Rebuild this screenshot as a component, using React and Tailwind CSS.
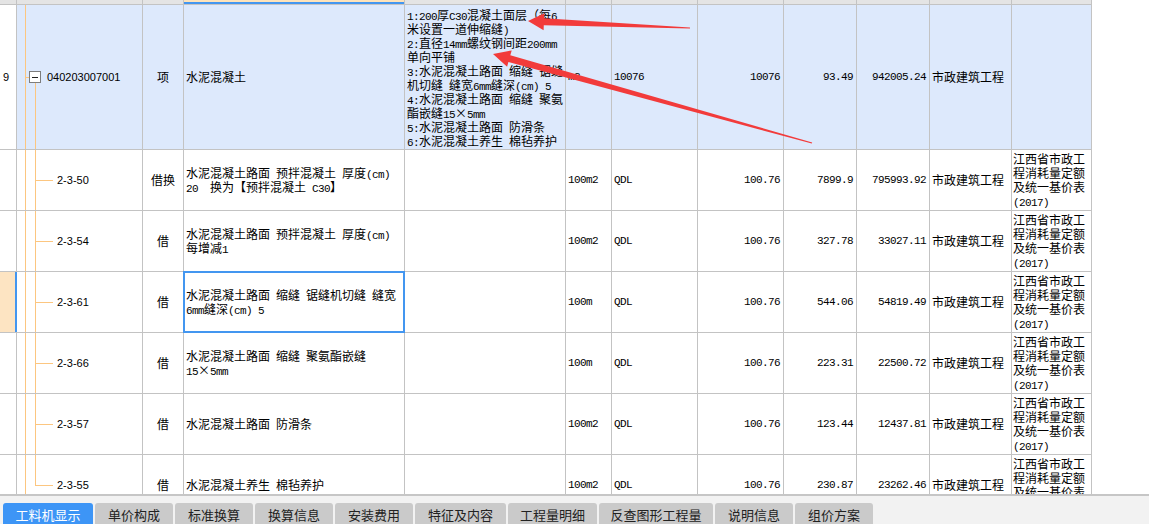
import React from 'react';

const COLS = 'grid grid-cols-[17px_126px_41px_221px_161px_46px_86px_86px_73px_73px_82px_80px] w-[1092px]';
const LINE = 'border-[#c3c3c3]';
const CJK = "font-['Noto_Sans_CJK_SC',sans-serif] text-[12px] leading-[14px]";
const MONO = "font-['Liberation_Mono','Noto_Sans_CJK_SC',monospace] text-[11px] tracking-[-0.6px]";
const SANS = "font-['Liberation_Sans',sans-serif] text-[11px]";
const TREE = 'bg-[#fcc680]';
const BLUE = 'bg-[#dde9fc]';
const STD = ['江西省市政工', '程消耗量定额', '及统一基价表', '(2017)'];

const items = [
  { code: '2-3-50', type: '借换', name: ['水泥混凝土路面 预拌混凝土 厚度(cm)', '20  换为【预拌混凝土 C30】'], unit: '100m2', qty: '100.76', price: '7899.9', total: '795993.92' },
  { code: '2-3-54', type: '借', name: ['水泥混凝土路面 预拌混凝土 厚度(cm)', '每增减1'], unit: '100m2', qty: '100.76', price: '327.78', total: '33027.11' },
  { code: '2-3-61', type: '借', name: ['水泥混凝土路面 缩缝 锯缝机切缝 缝宽', '6mm缝深(cm) 5'], unit: '100m', qty: '100.76', price: '544.06', total: '54819.49', selected: true },
  { code: '2-3-66', type: '借', name: ['水泥混凝土路面 缩缝 聚氨酯嵌缝', '15×5mm'], unit: '100m', qty: '100.76', price: '223.31', total: '22500.72' },
  { code: '2-3-57', type: '借', name: ['水泥混凝土路面 防滑条'], unit: '100m2', qty: '100.76', price: '123.44', total: '12437.81' },
  { code: '2-3-55', type: '借', name: ['水泥混凝土养生 棉毡养护'], unit: '100m2', qty: '100.76', price: '230.87', total: '23262.46', last: true },
];

const features = [
  '1:200厚C30混凝土面层（每6',
  '米设置一道伸缩缝)',
  '2:直径14mm螺纹钢间距200mm',
  '单向平铺',
  '3:水泥混凝土路面 缩缝 锯缝',
  '机切缝 缝宽6mm缝深(cm) 5',
  '4:水泥混凝土路面 缩缝 聚氨',
  '酯嵌缝15×5mm',
  '5:水泥混凝土路面 防滑条',
  '6:水泥混凝土养生 棉毡养护',
];

const tabs = [
  ['工料机显示', 'w-[90px]'],
  ['单价构成', 'w-[78px]'],
  ['标准换算', 'w-[78px]'],
  ['换算信息', 'w-[78px]'],
  ['安装费用', 'w-[78px]'],
  ['特征及内容', 'w-[91px]'],
  ['工程量明细', 'w-[89px]'],
  ['反查图形工程量', 'w-[114px]'],
  ['说明信息', 'w-[78px]'],
  ['组价方案', 'w-[78px]'],
];

// half-width runs get the narrow mono face, like the old song-ti grid
const Mixed = ({ text }) => (
  <div className="h-[14px] leading-[14px] whitespace-pre">
    {text.split(/([\x20-\x7e]+)/).map((part, i) =>
      i % 2 ? (
        <span key={i} className={`${MONO} leading-[14px]`}>{part}</span>
      ) : (
        <span key={i}>{part}</span>
      )
    )}
  </div>
);

// tapered arrow: tail S -> tip T
const arrowPoints = (S, T, L, W, w1, w0) => {
  const dx = T[0] - S[0];
  const dy = T[1] - S[1];
  const len = Math.hypot(dx, dy);
  const ux = dx / len, uy = dy / len;
  const nx = -uy, ny = ux;
  const B = [T[0] - ux * L, T[1] - uy * L];
  const p = (o, k) => `${(o[0] + nx * k).toFixed(1)},${(o[1] + ny * k).toFixed(1)}`;
  return [p(S, w0), p(B, w1), p(B, W), `${T[0]},${T[1]}`, p(B, -W), p(B, -w1), p(S, -w0)].join(' ');
};

const Num = ({ children, className = '' }) => (
  <div className={`flex items-center justify-end pr-[3px] border-r ${LINE} ${MONO} ${className}`}>{children}</div>
);

const Left = ({ children, className = '' }) => (
  <div className={`flex items-center pl-[2px] border-r ${LINE} ${className}`}>{children}</div>
);

const ItemRow = ({ it }) => (
  <div className={`${COLS} h-[61px] border-b ${LINE} text-black`}>
    <div className={it.selected ? 'bg-[#fde4c2] border-r-2 border-[#4396f0]' : `border-r ${LINE}`} />
    <div className={`flex border-r ${LINE}`}>
      <div className="w-[8px]" />
      <div className={`w-px ${TREE}`} />
      <div className="w-[9px]" />
      <div className="w-px flex flex-col">
        <div className={`${it.last ? 'h-[31px]' : 'flex-1'} ${TREE}`} />
      </div>
      <div className="flex items-center">
        <div className={`w-[17px] h-px ${TREE}`} />
        <span className={`ml-[4px] ${SANS}`}>{it.code}</span>
      </div>
    </div>
    <div className={`flex items-center justify-center border-r ${LINE} ${CJK}`}>{it.type}</div>
    <div className={`relative flex flex-col justify-center pl-[2px] border-r ${LINE} ${CJK}`}>
      {it.name.map((l) => (
        <Mixed key={l} text={l} />
      ))}
      {it.selected && <div className="absolute -inset-px border-2 border-[#4396f0] z-10" />}
    </div>
    <div className={`border-r ${LINE}`} />
    <Left className={MONO}>{it.unit}</Left>
    <Left className={MONO}>QDL</Left>
    <Num>{it.qty}</Num>
    <Num>{it.price}</Num>
    <Num>{it.total}</Num>
    <Left className={CJK}>市政建筑工程</Left>
    <div className={`flex flex-col justify-center pl-px border-r ${LINE} ${CJK}`}>
      {STD.map((l) => (
        <Mixed key={l} text={l} />
      ))}
    </div>
  </div>
);

export default function App() {
  return (
    <div className="w-[1149px] h-[524px] overflow-hidden bg-white flex flex-col">
      <div className="relative h-[494px] overflow-hidden">
        {/* header remnant */}
        <div className={`${COLS} h-[5px] border-b ${LINE}`}>
          {Array.from({ length: 12 }).map((_, i) => (
            <div
              key={i}
              className={`border-r ${LINE} ${i === 3 ? 'bg-[#fde3bb] shadow-[inset_0_-2px_0_#4396f0]' : 'bg-[#e4e4e4]'}`}
            />
          ))}
        </div>

        {/* bill row */}
        <div className={`${COLS} h-[145px] border-b ${LINE} text-black`}>
          <div className={`flex items-center pl-[3px] border-r ${LINE} ${SANS}`}>9</div>
          <div className={`flex border-r ${LINE} ${BLUE}`}>
            <div className="w-[8px]" />
            <div className={`w-px ${TREE}`} />
            <div className="flex-1 flex flex-col">
              <div className="flex-1" />
              <div className="flex items-center h-[12px]">
                <div className={`w-[3px] h-px ${TREE}`} />
                <div className="w-[12px] h-[12px] border border-[#7d7d7d] bg-white flex items-center justify-center">
                  <div className="w-[6px] h-px bg-[#222]" />
                </div>
                <span className={`ml-[6px] ${SANS}`}>040203007001</span>
              </div>
              <div className="flex-1 flex">
                <div className="w-[9px]" />
                <div className={`w-px ${TREE}`} />
              </div>
            </div>
          </div>
          <div className={`flex items-center justify-center border-r ${LINE} ${BLUE} ${CJK}`}>项</div>
          <Left className={`${BLUE} ${CJK}`}>水泥混凝土</Left>
          <div className={`flex flex-col justify-center pl-[2px] pt-[1px] border-r ${LINE} ${BLUE} ${CJK}`}>
            {features.map((l) => (
              <Mixed key={l} text={l} />
            ))}
          </div>
          <Left className={`${BLUE} ${MONO}`}>m2</Left>
          <Left className={`${BLUE} ${MONO}`}>10076</Left>
          <Num className={BLUE}>10076</Num>
          <Num className={BLUE}>93.49</Num>
          <Num className={BLUE}>942005.24</Num>
          <Left className={`${BLUE} ${CJK}`}>市政建筑工程</Left>
          <div className={`border-r ${LINE} ${BLUE}`} />
        </div>

        {items.map((it) => (
          <ItemRow key={it.code} it={it} />
        ))}

        {/* annotation arrows */}
        <svg className="absolute left-0 top-0 z-20 pointer-events-none" width="1149" height="494">
          <polygon points={arrowPoints([690, 28], [528, 21], 16, 8.5, 3.5, 0.6)} fill="#f23b3b" />
          <polygon points={arrowPoints([812, 143], [493, 54], 17, 8.5, 3.5, 0.6)} fill="#f23b3b" />
        </svg>
      </div>

      <div className="h-[30px] border-t-2 border-[#c6c6c6] bg-[#f2f2f2] flex gap-[2px] pl-[3px] pt-[7px]">
        {tabs.map(([t, w], i) => (
          <div
            key={t}
            className={`${w} h-[24px] shrink-0 rounded-t-[3px] flex justify-center pt-[3px] text-[13px] leading-[18px] font-['Noto_Sans_CJK_SC',sans-serif] ${
              i === 0 ? 'bg-[#3d95f6] text-white' : 'bg-[#cacaca] text-[#222]'
            }`}
          >
            {t}
          </div>
        ))}
      </div>
    </div>
  );
}
